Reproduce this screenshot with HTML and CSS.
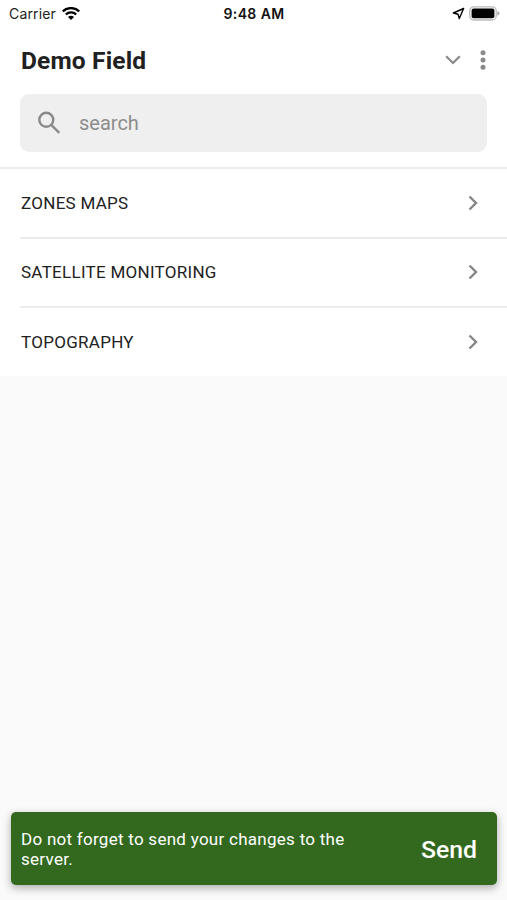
FILE: index.html
```html
<!DOCTYPE html>
<html lang="en">
<head>
<meta charset="utf-8">
<title>Demo Field</title>
<link rel="stylesheet" href="styles.css">
</head>
<body>
<div class="screen">
  <div class="status">
    <div class="carrier"><span>Carrier</span>
      <svg width="18" height="14" viewBox="0 0 18 14" fill="none" stroke="#000" stroke-width="2.3"><path d="M.8 4.3C5.3 0 12.7 0 17.2 4.3M3.8 7.5C6.7 4.7 11.3 4.7 14.2 7.5"/><path d="M6 10C7.7 8.3 10.3 8.3 12 10L9 13Z" fill="#000" stroke="none"/></svg>
    </div>
    <time class="clock">9:48 AM</time>
    <div class="indicators">
      <svg width="13" height="13" viewBox="0 0 13 13" fill="none" stroke="#000" stroke-width="1.4" stroke-linejoin="round"><path d="M11.6 1.5 1.4 6 6 7.2 7.3 11.5Z"/></svg>
      <svg width="31" height="15" viewBox="0 0 31 15"><rect x=".8" y=".8" width="26.4" height="13.2" rx="4" fill="#fff" stroke="#bbb" stroke-width="1.3"/><rect x="2.6" y="2.6" width="22.8" height="9.6" rx="2" fill="#000"/><path d="M28.3 5.1Q30.6 6 30.6 7.5T28.3 9.8Z" fill="#aaa"/></svg>
    </div>
  </div>
  <header class="header">
    <h1 class="title">Demo Field</h1>
    <svg class="chevron-down" width="16" height="10" viewBox="0 0 16 10" fill="none" stroke="#8a8a8a" stroke-width="2.2"><path d="M1.2 1.3 8 8 14.8 1.3"/></svg>
    <svg class="more" width="6" height="20" viewBox="0 0 6 20" fill="#8a8a8a"><circle cx="3" cy="2.7" r="2.5"/><circle cx="3" cy="10" r="2.5"/><circle cx="3" cy="17.3" r="2.5"/></svg>
  </header>
  <div class="search-area">
    <div class="search">
      <svg width="24" height="24" viewBox="0 0 24 24" fill="none" stroke="#8a8a8a" stroke-width="2.4"><circle cx="9.3" cy="8.8" r="7"/><path d="M14.2 13.8 22.3 21.8"/></svg>
      <span>search</span>
    </div>
  </div>
  <ul class="list">
    <li class="row"><span>ZONES MAPS</span><svg class="chevron" width="10" height="16" viewBox="0 0 10 16"><path d="M1.5 1.5 8 8 1.5 14.5"/></svg></li>
    <li class="row"><span>SATELLITE MONITORING</span><svg class="chevron" width="10" height="16" viewBox="0 0 10 16"><path d="M1.5 1.5 8 8 1.5 14.5"/></svg></li>
    <li class="row"><span>TOPOGRAPHY</span><svg class="chevron" width="10" height="16" viewBox="0 0 10 16"><path d="M1.5 1.5 8 8 1.5 14.5"/></svg></li>
  </ul>
  <div class="snackbar">
    <p class="message">Do not forget to send your changes to the server.</p>
    <span class="send">Send</span>
  </div>
</div>
</body>
</html>
```
FILE: styles.css
```css
* { box-sizing: border-box; }
body { margin: 0; background: #fafafa; color: #212121; font-family: Roboto, sans-serif; }
.screen { display: flex; flex-direction: column; height: 900px; }
.status { display: grid; grid-template-columns: 1fr auto 1fr; align-items: center; height: 27px; padding: 0 7px 0 9px; background: #fff; font-family: Inter, sans-serif; font-size: 14px; }
.carrier { display: flex; align-items: center; gap: 6px; letter-spacing: .15px; }
.clock { margin-right: 1px; font-weight: 600; letter-spacing: .4px; color: #111; }
.indicators { display: flex; justify-content: flex-end; align-items: center; gap: 4px; }
.header { display: flex; align-items: center; height: 67px; padding: 0 21px 1px; background: #fff; }
.title { flex: 1; margin: 0; padding-top: 1px; font-size: 24.5px; font-weight: 700; line-height: 28px; letter-spacing: .15px; }
.chevron-down { margin-right: 19px; }
.search-area { padding: 0 20px 15px; background: #fff; }
.search { display: flex; align-items: center; gap: 18px; height: 58px; padding: 0 0 1px 17px; border-radius: 9px; background: #efefef; color: #8c8c8c; font-size: 20px; }
.list { margin: 0; padding: 0; border-top: 2px solid #ebebeb; background: #fff; list-style: none; }
.row { display: flex; align-items: center; justify-content: space-between; height: 67.5px; margin-left: 20px; padding: 0 29px 0 1px; font-size: 17px; letter-spacing: .28px; }
.row + .row { height: 69.75px; padding-bottom: 1px; border-top: 2px solid #ebebeb; }
.chevron { fill: none; stroke: #858585; stroke-width: 2.4; }
.snackbar { display: flex; align-items: center; justify-content: space-between; height: 73px; margin: auto 10px 15px 11px; padding: 0 20px 0 10px; border-radius: 5px; background: #33691e; color: #fff; box-shadow: 0 3px 9px rgba(0, 0, 0, .32); }
.message { width: 345px; margin: 0; font-size: 17px; line-height: 20px; letter-spacing: .27px; }
.send { padding-top: 1px; font-size: 24.8px; font-weight: 500; }
```
